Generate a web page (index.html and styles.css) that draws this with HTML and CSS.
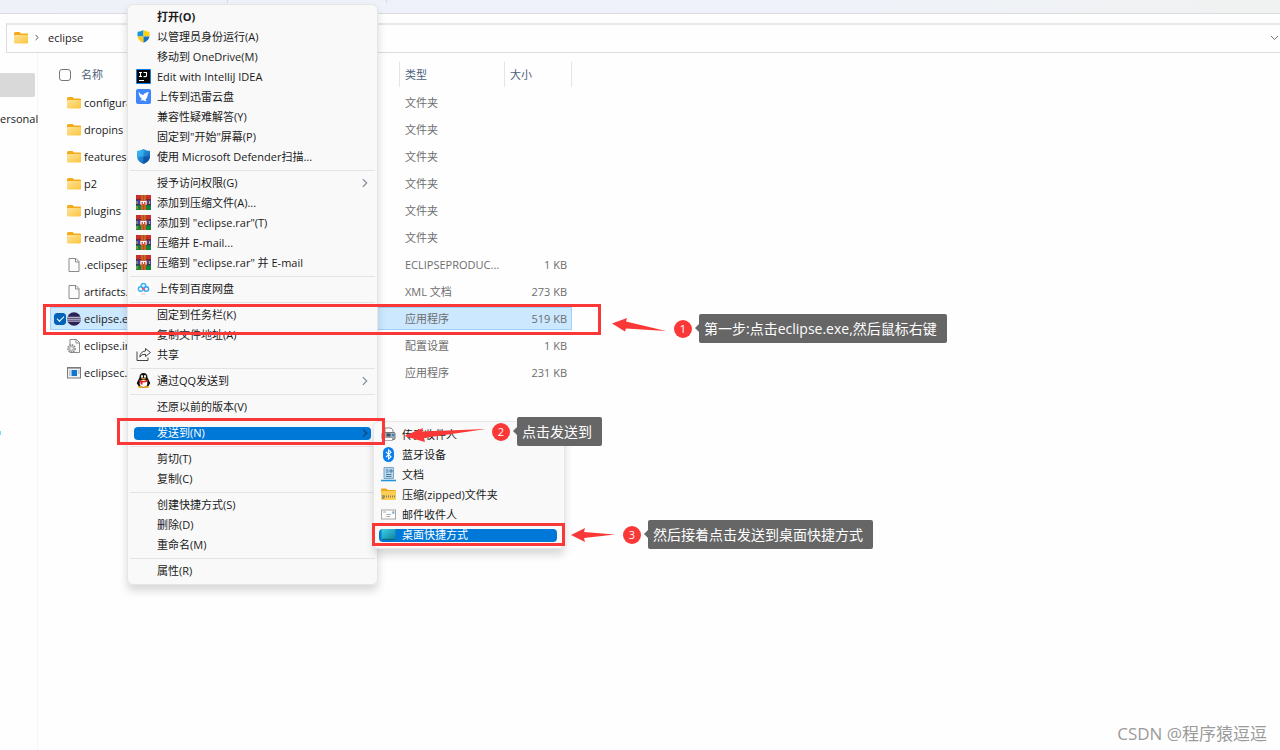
FILE: index.html
```html
<!DOCTYPE html>
<html lang="zh-CN">
<head>
  <meta charset="UTF-8">
  <title>eclipse</title>
  <link rel="stylesheet" href="styles.css">
</head>
<body>
  <!-- shared icons -->
  <svg class="sprite" aria-hidden="true">
    <defs>
      <linearGradient id="gFolder" x1="0" y1="0" x2="1" y2="1"><stop offset="0" stop-color="#ffe29a"/><stop offset="1" stop-color="#fbc63c"/></linearGradient>
      <linearGradient id="gShield" x1="0" y1="0" x2="1" y2="1"><stop offset="0" stop-color="#35b5f0"/><stop offset="1" stop-color="#0a4fa8"/></linearGradient>
      <linearGradient id="gDesk" x1="0" y1="0" x2="1" y2="1"><stop offset="0" stop-color="#3fd0e6"/><stop offset="1" stop-color="#0e7f9c"/></linearGradient>
    </defs>
    <symbol id="folder" viewBox="0 0 14 14">
      <path d="M0 2.500Q0 1 1.200 1H5.500l1.600 1.600H13q1 0 1 1V7H0z" fill="#f3ab1b"/>
      <rect y="4" width="14" height="8.500" rx="1" fill="url(#gFolder)"/>
    </symbol>
    <symbol id="file" viewBox="0 0 14 14">
      <path d="M2 .5h7l3 3v10H2z" fill="#fbfbfb" stroke="#8b8b8b"/><path d="M8.500.5V4H12" fill="none" stroke="#8b8b8b"/>
    </symbol>
    <symbol id="ini" viewBox="0 0 14 14">
      <path d="M3 .5h6.500l3 3v10H3z" fill="#fbfbfb" stroke="#8b8b8b"/><path d="M9 .5V4h3.500" fill="none" stroke="#8b8b8b"/>
      <circle cx="4.500" cy="9.500" r="3.600" fill="#ddd" stroke="#858585" stroke-width="1.600" stroke-dasharray="1.400 1"/><circle cx="4.500" cy="9.500" r="2" fill="#eee" stroke="#999" stroke-width=".8"/>
    </symbol>
    <symbol id="exe" viewBox="0 0 14 12">
      <rect x=".5" y=".5" width="13" height="10.500" fill="#f2f2f2" stroke="#7b7b7b"/><path d="M1 1.500h12" stroke="#aaa"/>
      <rect x="4.500" y="3" width="5.500" height="6" fill="#0a78d4"/><path d="M2 4h1.500M2 6h1.500M2 8h1.500M11 4h1.500M11 6h1.500" stroke="#999"/>
    </symbol>
    <symbol id="eclipse" viewBox="0 0 14 14">
      <circle cx="7" cy="7" r="6.800" fill="#2c2255"/><path d="M.6 5.300h12.800M.2 7.200h13.600M.6 9.100h12.800" stroke="#d9d5ea" stroke-width="1"/>
    </symbol>
    <symbol id="uac" viewBox="0 0 15 15">
      <path d="M7.500 1Q4.500 3 1.500 2.800V7.500H7.500z" fill="#1c94d8"/><path d="M7.500 1Q10.500 3 13.500 2.800V7.500H7.500z" fill="#fdd00f"/>
      <path d="M1.500 7.500h6v6.300Q2.500 12 1.500 7.500z" fill="#fdc90f"/><path d="M13.500 7.500h-6v6.300Q12.500 12 13.500 7.500z" fill="#1673c4"/>
    </symbol>
    <symbol id="idea" viewBox="0 0 15 15">
      <rect width="15" height="15" rx="1" fill="#1679e0"/><rect x="1" y="1" width="13" height="13" fill="#050505"/>
      <path d="M3 3.500h3M4.500 3.500v4M3 7.500h3M7.500 3.500h3v3.200q0 .9-1 .9H7.500M3 11.500h5" fill="none" stroke="#fff" stroke-width="1.100"/>
    </symbol>
    <symbol id="bird" viewBox="0 0 15 15">
      <rect width="15" height="15" rx="2" fill="#3f85fb"/>
      <path d="M2.500 3Q4 5 7 6.300 8 3.800 12.800 3L11.700 6q-.2 3-2.200 4.200L10.500 12.500 7 11.300 4.200 11.500 6 9.800Q3 8 2.500 3z" fill="#fff"/>
    </symbol>
    <symbol id="defender" viewBox="0 0 15 15">
      <path d="M7.500 0Q4.500 2 1 2v5q0 5.500 6.500 8Q14 12.500 14 7V2Q10.500 2 7.500 0z" fill="url(#gShield)"/>
      <path d="M7.500 0Q4.500 2 1 2v5.500h6.500z" fill="#39b8f2" opacity=".7"/><path d="M7.500 7.500H14Q13.500 12.500 7.500 15z" fill="#0b4b9b" opacity=".7"/>
    </symbol>
    <symbol id="rar" viewBox="0 0 15 15">
      <rect width="15" height="5" fill="#c9302c"/><rect y="5" width="15" height="5" fill="#4543b0"/><rect y="10" width="15" height="5" fill="#13843b"/>
      <path d="M0 4.800h15M0 9.800h15" stroke="#302238" stroke-width=".8"/><path d="M1 6v3M13.500 6v3M1 11v3" stroke="#c6b13c"/>
      <rect x="5" width="5" height="15" fill="#b64b20"/><path d="M6 0v15M9 0v15" stroke="#dc9a32" stroke-width=".7"/>
      <rect x="4" y="5" width="7" height="5" fill="#cc5433"/><path d="M5 9.500V6.500h5v3M7.500 6v3" fill="none" stroke="#fff" stroke-width="1.100"/>
    </symbol>
    <symbol id="baidu" viewBox="0 0 15 15">
      <rect width="15" height="15" rx="2" fill="#fff"/><g fill="none" stroke-width="1.500"><circle cx="7.500" cy="4.800" r="2.300" stroke="#36b7f5"/><circle cx="4.700" cy="8" r="2.300" stroke="#36b7f5"/><circle cx="10.300" cy="8" r="2.300" stroke="#36a2f5"/><path d="M6 6.700l3 2.600" stroke="#f0556b"/></g><path d="M5.500 13h4" stroke="#f5b6bd"/>
    </symbol>
    <symbol id="share" viewBox="0 0 15 15">
      <path d="M1 4.500v9h11V10.500" fill="none" stroke="#444"/><path d="M9.500 1.500l5 4-5 4V7.200Q5.500 7 3.800 10 4.200 4.500 9.500 4z" fill="none" stroke="#444" stroke-linejoin="round"/>
    </symbol>
    <symbol id="qq" viewBox="0 0 15 15">
      <path d="M7.500 0Q3.500 0 3.500 4.500L1 9.500q-.5 2.500.8 1.800Q2 14.500 7.500 14.500t5.700-3.200q1.300.7.8-1.800L11.500 4.500Q11.500 0 7.500 0z" fill="#111"/>
      <ellipse cx="7.500" cy="10.500" rx="3.800" ry="3.400" fill="#fff"/><ellipse cx="6" cy="3.500" rx="1" ry="1.400" fill="#fff"/><ellipse cx="9" cy="3.500" rx="1" ry="1.400" fill="#fff"/>
      <ellipse cx="7.500" cy="5.700" rx="2.500" ry=".8" fill="#f5a40c"/><path d="M3 6.800q4.500 2.400 9 0v1.800q-2.500 1-5.500 1v2H4.500V9L3 8.300z" fill="#e7211c"/>
      <ellipse cx="4.500" cy="14" rx="2.500" ry="1" fill="#f5a40c"/><ellipse cx="10.500" cy="14" rx="2.500" ry="1" fill="#f5a40c"/>
    </symbol>
    <symbol id="fax" viewBox="0 0 15 15">
      <path d="M4 6V1h6l2 2v3" fill="#fff" stroke="#8b8b8b"/><rect x="1" y="5.500" width="13" height="7" rx="1" fill="#a9adb0" stroke="#74797c"/>
      <rect x="5.500" y="6.500" width="4" height="3" fill="#356"/><rect x="11" y="7" width="2" height="2" fill="#1a8fe0"/><path d="M3.500 10.500h8v3h-8z" fill="#fff" stroke="#888" stroke-width=".7"/><path d="M2.500 6.500v3" stroke="#eee"/>
    </symbol>
    <symbol id="bluetooth" viewBox="0 0 15 15">
      <rect x="2" width="11" height="15" rx="5.500" fill="#0a7ff0"/><path d="M5 4.800l5 5L7.500 12V3L10 5.200l-5 5" fill="none" stroke="#fff" stroke-width="1.100"/>
    </symbol>
    <symbol id="docs" viewBox="0 0 15 15">
      <path d="M3 .5h9.500v11H3z" fill="#b8d8ee" stroke="#7da5c3"/><path d="M5 3h2.500M5 5h2.500M5 7.500h5.500M5 9.500h5.500M9 3h2v2H9z" stroke="#3f719a" stroke-width=".9" fill="none"/><path d="M0 13.500h15" stroke="#2493d8" stroke-width="1.600"/>
    </symbol>
    <symbol id="zip" viewBox="0 0 15 15">
      <path d="M0 2.500q0-1 1-1h4L7 3h7q1 0 1 1v3H0z" fill="#f0a51a"/><rect y="4" width="15" height="9" rx="1" fill="#fdce55"/>
      <path d="M1 9.500h13" stroke="#8b8058" stroke-width="1.800" stroke-dasharray="1 1"/><rect x="1" y="8" width="2.500" height="4" rx="1" fill="#979178"/>
    </symbol>
    <symbol id="mail" viewBox="0 0 15 15">
      <rect x=".5" y="3" width="14" height="9" fill="#fdfdfd" stroke="#a6a6a6"/><path d="M2 5h3M5.500 7.500H10M5.500 9.500H9" stroke="#aaa"/><path d="M11.300 4.300h2v2.400h-2z" fill="#67a5d6"/>
    </symbol>
    <symbol id="desktop" viewBox="0 0 15 15">
      <rect x=".5" y="2" width="14" height="11" rx="1" fill="url(#gDesk)"/><path d="M1 12.300h13" stroke="#0b536b" stroke-width=".8"/>
    </symbol>
    <symbol id="chevron" viewBox="0 0 7 11"><path d="M1 1l4.500 4.500L1 10" fill="none" stroke="currentColor" stroke-width="1.300"/></symbol>
  </svg>

  <div class="window">
    <div class="tabstrip"><span></span><span></span></div>

    <nav class="address">
      <svg class="ico14"><use href="#folder"/></svg>
      <svg class="crumb"><use href="#chevron"/></svg>
      <a href="#">eclipse</a>
      <svg class="drop" viewBox="0 0 9 6"><path d="M1 1l3.500 3.500L8 1" fill="none" stroke="#777"/></svg>
    </nav>

    <div class="main">
      <aside class="sidebar">
        <div class="current"></div>
        <div class="account">ersonal</div>
        <div class="sync"></div>
      </aside>

      <table class="files">
        <thead>
          <tr>
            <th class="col-name"><label><input type="checkbox"> 名称</label></th>
            <th class="col-type">类型</th>
            <th class="col-size">大小</th>
          </tr>
        </thead>
        <tbody>
          <tr><td><label><input type="checkbox"><svg class="ico14"><use href="#folder"/></svg>configuration</label></td><td>文件夹</td><td></td></tr>
          <tr><td><label><input type="checkbox"><svg class="ico14"><use href="#folder"/></svg>dropins</label></td><td>文件夹</td><td></td></tr>
          <tr><td><label><input type="checkbox"><svg class="ico14"><use href="#folder"/></svg>features</label></td><td>文件夹</td><td></td></tr>
          <tr><td><label><input type="checkbox"><svg class="ico14"><use href="#folder"/></svg>p2</label></td><td>文件夹</td><td></td></tr>
          <tr><td><label><input type="checkbox"><svg class="ico14"><use href="#folder"/></svg>plugins</label></td><td>文件夹</td><td></td></tr>
          <tr><td><label><input type="checkbox"><svg class="ico14"><use href="#folder"/></svg>readme</label></td><td>文件夹</td><td></td></tr>
          <tr><td><label><input type="checkbox"><svg class="ico14"><use href="#file"/></svg>.eclipseproduct</label></td><td>ECLIPSEPRODUC...</td><td>1 KB</td></tr>
          <tr><td><label><input type="checkbox"><svg class="ico14"><use href="#file"/></svg>artifacts.xml</label></td><td>XML 文档</td><td>273 KB</td></tr>
          <tr class="selected"><td><label><input type="checkbox" checked><svg class="ico14"><use href="#eclipse"/></svg>eclipse.exe</label></td><td>应用程序</td><td>519 KB</td></tr>
          <tr><td><label><input type="checkbox"><svg class="ico14"><use href="#ini"/></svg>eclipse.ini</label></td><td>配置设置</td><td>1 KB</td></tr>
          <tr><td><label><input type="checkbox"><svg class="ico14"><use href="#exe"/></svg>eclipsec.exe</label></td><td>应用程序</td><td>231 KB</td></tr>
        </tbody>
      </table>
    </div>
  </div>

  <!-- context menu -->
  <div class="menu context-menu">
    <button class="default"><i></i>打开(O)</button>
    <button><svg><use href="#uac"/></svg>以管理员身份运行(A)</button>
    <button><i></i>移动到 OneDrive(M)</button>
    <button><svg><use href="#idea"/></svg>Edit with IntelliJ IDEA</button>
    <button><svg><use href="#bird"/></svg>上传到迅雷云盘</button>
    <button><i></i>兼容性疑难解答(Y)</button>
    <button><i></i>固定到"开始"屏幕(P)</button>
    <button><svg><use href="#defender"/></svg>使用 Microsoft Defender扫描...</button>
    <hr>
    <button><i></i>授予访问权限(G)<svg class="more"><use href="#chevron"/></svg></button>
    <button><svg><use href="#rar"/></svg>添加到压缩文件(A)...</button>
    <button><svg><use href="#rar"/></svg>添加到 "eclipse.rar"(T)</button>
    <button><svg><use href="#rar"/></svg>压缩并 E-mail...</button>
    <button><svg><use href="#rar"/></svg>压缩到 "eclipse.rar" 并 E-mail</button>
    <hr>
    <button><svg><use href="#baidu"/></svg>上传到百度网盘</button>
    <hr>
    <button><i></i>固定到任务栏(K)</button>
    <button><i></i>复制文件地址(A)</button>
    <button><svg><use href="#share"/></svg>共享</button>
    <hr>
    <button><svg><use href="#qq"/></svg>通过QQ发送到<svg class="more"><use href="#chevron"/></svg></button>
    <hr>
    <button><i></i>还原以前的版本(V)</button>
    <hr>
    <button class="active"><i></i>发送到(N)<svg class="more"><use href="#chevron"/></svg></button>
    <hr>
    <button><i></i>剪切(T)</button>
    <button><i></i>复制(C)</button>
    <hr>
    <button><i></i>创建快捷方式(S)</button>
    <button><i></i>删除(D)</button>
    <button><i></i>重命名(M)</button>
    <hr>
    <button><i></i>属性(R)</button>
  </div>

  <div class="menu send-menu">
    <button><svg><use href="#fax"/></svg>传真收件人</button>
    <button><svg><use href="#bluetooth"/></svg>蓝牙设备</button>
    <button><svg><use href="#docs"/></svg>文档</button>
    <button><svg><use href="#zip"/></svg>压缩(zipped)文件夹</button>
    <button><svg><use href="#mail"/></svg>邮件收件人</button>
    <button class="active"><svg><use href="#desktop"/></svg>桌面快捷方式</button>
  </div>

  <!-- step annotations -->
  <div class="box box-1"></div>
  <div class="box box-2"></div>
  <div class="box box-3"></div>

  <svg class="arrow arrow-1" viewBox="0 0 54 14"><path d="M0 5.500L15 0l-1 3.500L54 13 14 10.500l-1 3z"/></svg>
  <svg class="arrow arrow-2" viewBox="0 0 82 14"><path d="M0 8L19 0l-1 3.500L82 1 20 10l1 4z"/></svg>
  <svg class="arrow arrow-3" viewBox="0 0 44 14"><path d="M0 7L14 0l-1 4L44 6.500 13 10l1 4z"/></svg>

  <div class="step step-1"><b>1</b><span>第一步:点击eclipse.exe,然后鼠标右键</span></div>
  <div class="step step-2"><b>2</b><span>点击发送到</span></div>
  <div class="step step-3"><b>3</b><span>然后接着点击发送到桌面快捷方式</span></div>

  <div class="watermark">CSDN @程序猿逗逗</div>
</body>
</html>
```
FILE: styles.css
```css
* {
  box-sizing: border-box;
}
body {
  margin: 0;
  font-family: "Open Sans", "Noto Sans CJK SC", sans-serif;
  font-size: 11px;
  line-height: 16px;
  color: #1a1a1a;
  background: #fefefe;
  overflow: hidden;
}
.sprite {
  position: absolute;
  width: 0;
  height: 0;
}

/* explorer window */
.window {
  display: flex;
  flex-direction: column;
  height: 100vh;
}
.tabstrip {
  display: flex;
  flex: none;
  height: 14px;
  background: linear-gradient(90deg, #eef1f8, #eff2fa 60%, #f0f2f1);
  border-bottom: 1px solid #dcdde0;
}
.tabstrip span {
  width: 228px;
  height: 3px;
  border-right: 1px solid #d8dae2;
}
.tabstrip span + span {
  width: 159px;
}
.address {
  display: flex;
  flex: none;
  align-items: center;
  height: 30px;
  margin: 9px 0 0 6px;
  padding: 0 1px 2px 7px;
  border: 1px solid #dcdcdc;
  border-top: 2px solid #e8e8e8;
  border-right: 0;
}
.address a {
  margin-left: 9px;
  color: #222;
  text-decoration: none;
}
.crumb {
  width: 4px;
  height: 7px;
  margin-left: 7px;
  color: #222;
}
.drop {
  width: 9px;
  height: 6px;
  margin-left: auto;
}
.ico14 {
  flex: none;
  width: 14px;
  height: 14px;
}
.main {
  display: flex;
  flex: 1;
  align-items: stretch;
}
.sidebar {
  flex: none;
  width: 38px;
  margin-right: 12px;
  padding-top: 20px;
  border-right: 1px solid #f5f5f5;
}
.current {
  width: 35px;
  height: 24px;
  background: #d9d9d9;
  border-radius: 0 2px 2px 0;
}
.account {
  margin-top: 14px;
}
.sync {
  width: 1px;
  height: 4px;
  margin-top: 304px;
  background: #6be3f5;
}

/* file list */
.files {
  align-self: flex-start;
  table-layout: fixed;
  width: 522px;
  margin-top: 5px;
  border-spacing: 0 4px;
}
.files th {
  height: 25px;
  padding: 0 5px;
  border-right: 1px solid #e5e5e5;
  color: #4c607a;
  font-weight: normal;
  text-align: left;
}
.files th.col-name {
  width: 350px;
  padding-left: 9px;
}
.files th.col-type {
  width: 105px;
}
.files td {
  height: 23px;
  padding: 0 5px;
  color: #6d6d6d;
  white-space: nowrap;
}
.files td:first-child {
  padding-left: 4px;
  color: #1a1a1a;
}
.files td:last-child {
  text-align: right;
}
.files label {
  display: flex;
  align-items: center;
}
.files input {
  appearance: none;
  flex: none;
  width: 12px;
  height: 12px;
  margin: 0 10px 0 0;
  background: #fff;
  border: 1px solid #777;
  border-radius: 3px;
}
.files td input {
  margin-right: 1px;
  opacity: 0;
}
.files td input:checked {
  background: #0063b9;
  border-color: #0063b9;
  opacity: 1;
}
.files td input:checked::after {
  content: "";
  display: block;
  width: 6px;
  height: 3px;
  margin: 2px;
  border: solid #fff;
  border-width: 0 0 1px 1px;
  transform: rotate(-45deg);
}
.files td .ico14 {
  margin-right: 3px;
}
.files .selected td {
  background: #cce8ff;
  border: solid #9fd2fb;
  border-width: 1px 0;
}
.files .selected td:first-child {
  padding-left: 3px;
  border-left-width: 1px;
}
.files .selected td:last-child {
  padding-right: 4px;
  border-right-width: 1px;
}

/* menus */
.menu {
  position: absolute;
  padding: 2px 0 3px;
  background: #f9f9f9;
  border: 1px solid #e6e6e6;
  border-radius: 6px;
  box-shadow: 0 6px 9px rgba(0, 0, 0, 0.15);
}
.context-menu {
  left: 127px;
  top: 4px;
  width: 251px;
}
.send-menu {
  left: 373px;
  top: 421px;
  width: 192px;
  padding-top: 3px;
}
.menu button {
  display: flex;
  align-items: center;
  gap: 6px;
  width: calc(100% - 12px);
  height: 13px;
  margin: 4px 6px 7px;
  padding: 0 3px 2px 2px;
  border: 0;
  border-radius: 4px;
  background: none;
  color: #1a1a1a;
  font: inherit;
  text-align: left;
  white-space: nowrap;
}
.send-menu button {
  margin-left: 5px;
}
.menu button:last-child {
  margin-bottom: 3px;
}
.menu button.default {
  font-weight: bold;
}
.menu button.active {
  background: #0078d7;
  color: #fff;
}
.menu svg,
.menu i {
  flex: none;
  width: 15px;
  height: 15px;
}
.menu svg.more {
  width: 6px;
  height: 10px;
  margin-left: auto;
  color: #7d8696;
}
.menu .active svg.more {
  color: #1c3f6b;
}
.menu hr {
  height: 1px;
  margin: -1px 2px 6px;
  border: 0;
  background: #e3e3e3;
}

/* annotations */
.box {
  position: absolute;
  border: 3px solid #fb3838;
}
.box-1 {
  left: 43px;
  top: 304px;
  width: 558px;
  height: 31px;
}
.box-2 {
  left: 117px;
  top: 418px;
  width: 268px;
  height: 27px;
}
.box-3 {
  left: 372px;
  top: 523px;
  width: 193px;
  height: 23px;
}
.arrow {
  position: absolute;
  height: 14px;
  fill: #fb3838;
}
.arrow-1 {
  left: 612px;
  top: 318px;
  width: 54px;
}
.arrow-2 {
  left: 404px;
  top: 428px;
  width: 82px;
}
.arrow-3 {
  left: 571px;
  top: 528px;
  width: 44px;
}
.step {
  position: absolute;
  display: flex;
  align-items: center;
  gap: 7px;
}
.step-1 {
  left: 674px;
  top: 314px;
}
.step-2 {
  left: 492px;
  top: 417px;
}
.step-3 {
  left: 623px;
  top: 520px;
}
.step b {
  width: 18px;
  height: 18px;
  border-radius: 50%;
  background: #fb3838;
  color: #fff;
  font-weight: normal;
  line-height: 18px;
  text-align: center;
}
.step span {
  position: relative;
  padding: 0 10px 0 5px;
  border-radius: 2px;
  background: #666;
  color: #fff;
  font-size: 14px;
  line-height: 29px;
  white-space: nowrap;
}
.step span::before {
  content: "";
  position: absolute;
  left: -4px;
  top: 10px;
  border: solid transparent;
  border-width: 4px 4px 4px 0;
  border-right-color: #666;
}
.watermark {
  position: absolute;
  right: 13px;
  bottom: 4px;
  color: #9b9b9b;
  font-size: 17px;
  line-height: 24px;
}
```
